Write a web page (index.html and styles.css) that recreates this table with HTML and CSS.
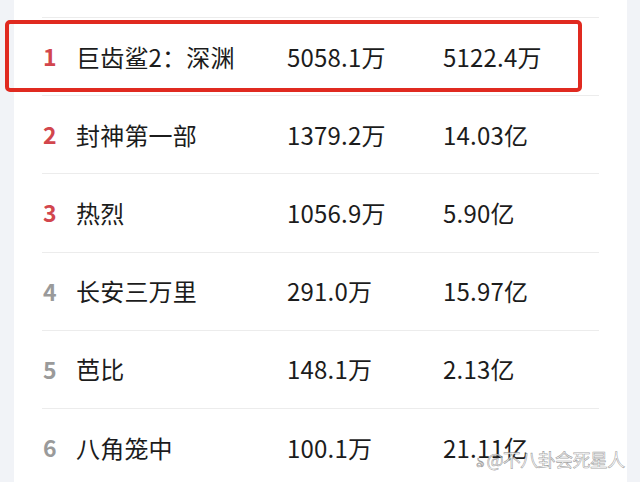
FILE: index.html
```html
<!DOCTYPE html>
<html lang="zh">
<head>
<meta charset="utf-8">
<link rel="stylesheet" href="styles.css">
</head>
<body>
<div class="page">
  <div class="strip"></div>
  <main class="board">
    <div class="list">
      <div class="row head"></div>
      <div class="row"><span class="rank top">1</span><span class="name">巨齿鲨2：深渊</span><span class="num">5058.1万</span><span class="num">5122.4万</span></div>
      <div class="row"><span class="rank top">2</span><span class="name">封神第一部</span><span class="num">1379.2万</span><span class="num">14.03亿</span></div>
      <div class="row"><span class="rank top">3</span><span class="name">热烈</span><span class="num">1056.9万</span><span class="num">5.90亿</span></div>
      <div class="row"><span class="rank">4</span><span class="name">长安三万里</span><span class="num">291.0万</span><span class="num">15.97亿</span></div>
      <div class="row"><span class="rank">5</span><span class="name">芭比</span><span class="num">148.1万</span><span class="num">2.13亿</span></div>
      <div class="row last"><span class="rank">6</span><span class="name">八角笼中</span><span class="num">100.1万</span><span class="num">21.11亿</span></div>
    </div>
    <div class="highlight"></div>
    <div class="watermark"><span class="wm-icon">ঌ</span>@不八卦会死星人</div>
  </main>
  <div class="strip"></div>
</div>
</body>
</html>
```
FILE: styles.css
```css
html, body {
  margin: 0;
  padding: 0;
  background: #ffffff;
}
.page {
  display: flex;
  width: 640px;
  height: 482px;
  overflow: hidden;
  font-family: "Noto Sans CJK SC", "Noto Sans", sans-serif;
  color: #1c1c1c;
}
.strip {
  width: 14px;
  flex: none;
  background: #f1f3f7;
}
.board {
  flex: 1;
  position: relative;
  background: #ffffff;
}
.list {
  padding: 0 28px;
}
.row {
  display: flex;
  align-items: center;
  height: 77.2px;
  border-bottom: 1px solid #ececec;
  font-size: 24px;
  line-height: 1;
  letter-spacing: 0.2px;
}
.row.head {
  height: 17px;
}
.row.last {
  border-bottom: none;
}
.rank {
  width: 34px;
  flex: none;
  font-size: 23px;
  font-weight: 600;
  color: #9a9a9a;
  padding-left: 1px;
  box-sizing: border-box;
}
.rank.top {
  color: #d2464d;
}
.name {
  width: 211px;
  flex: none;
}
.num {
  width: 156px;
  flex: none;
}
.highlight {
  position: absolute;
  left: -9px;
  top: 20px;
  width: 577px;
  height: 72px;
  box-sizing: border-box;
  border: 4.5px solid #e02a20;
  border-radius: 5px;
}
.watermark {
  position: absolute;
  left: 462px;
  top: 449px;
  font-size: 18px;
  line-height: 20px;
  color: rgba(255, 255, 255, 0.85);
  -webkit-text-stroke: 0.6px rgba(120, 120, 120, 0.7);
  white-space: nowrap;
  letter-spacing: -0.6px;
}
.wm-icon {
  font-size: 14px;
  margin-right: 3px;
}
```
